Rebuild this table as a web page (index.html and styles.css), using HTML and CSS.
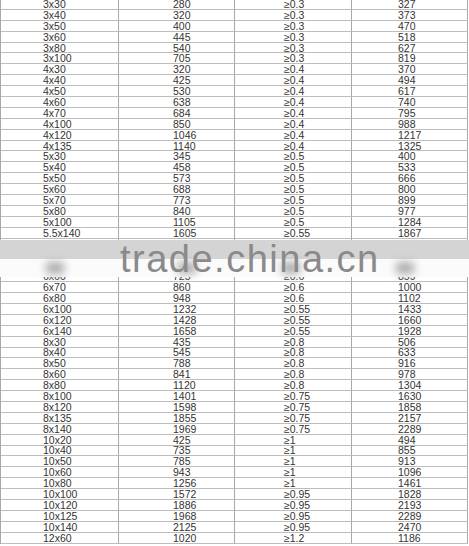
FILE: index.html
```html
<!DOCTYPE html>
<html>
<head>
<meta charset="utf-8">
<link rel="stylesheet" href="styles.css">
</head>
<body>
<div class="page">
  <div class="tbl">
    <div class="c">3x30</div><div class="c">280</div><div class="c">≥0.3</div><div class="c">327</div>
    <div class="c">3x40</div><div class="c">320</div><div class="c">≥0.3</div><div class="c">373</div>
    <div class="c">3x50</div><div class="c">400</div><div class="c">≥0.3</div><div class="c">470</div>
    <div class="c">3x60</div><div class="c">445</div><div class="c">≥0.3</div><div class="c">518</div>
    <div class="c">3x80</div><div class="c">540</div><div class="c">≥0.3</div><div class="c">627</div>
    <div class="c">3x100</div><div class="c">705</div><div class="c">≥0.3</div><div class="c">819</div>
    <div class="c">4x30</div><div class="c">320</div><div class="c">≥0.4</div><div class="c">370</div>
    <div class="c">4x40</div><div class="c">425</div><div class="c">≥0.4</div><div class="c">494</div>
    <div class="c">4x50</div><div class="c">530</div><div class="c">≥0.4</div><div class="c">617</div>
    <div class="c">4x60</div><div class="c">638</div><div class="c">≥0.4</div><div class="c">740</div>
    <div class="c">4x70</div><div class="c">684</div><div class="c">≥0.4</div><div class="c">795</div>
    <div class="c">4x100</div><div class="c">850</div><div class="c">≥0.4</div><div class="c">988</div>
    <div class="c">4x120</div><div class="c">1046</div><div class="c">≥0.4</div><div class="c">1217</div>
    <div class="c">4x135</div><div class="c">1140</div><div class="c">≥0.4</div><div class="c">1325</div>
    <div class="c">5x30</div><div class="c">345</div><div class="c">≥0.5</div><div class="c">400</div>
    <div class="c">5x40</div><div class="c">458</div><div class="c">≥0.5</div><div class="c">533</div>
    <div class="c">5x50</div><div class="c">573</div><div class="c">≥0.5</div><div class="c">666</div>
    <div class="c">5x60</div><div class="c">688</div><div class="c">≥0.5</div><div class="c">800</div>
    <div class="c">5x70</div><div class="c">773</div><div class="c">≥0.5</div><div class="c">899</div>
    <div class="c">5x80</div><div class="c">840</div><div class="c">≥0.5</div><div class="c">977</div>
    <div class="c">5x100</div><div class="c">1105</div><div class="c">≥0.5</div><div class="c">1284</div>
    <div class="c">5.5x140</div><div class="c">1605</div><div class="c">≥0.55</div><div class="c">1867</div>
    <div class="c"></div><div class="c"></div><div class="c"></div><div class="c"></div>
    <div class="c"></div><div class="c"></div><div class="c"></div><div class="c"></div>
    <div class="c"></div><div class="c"></div><div class="c"></div><div class="c"></div>
    <div class="c">6x60</div><div class="c">725</div><div class="c">≥0.6</div><div class="c">859</div>
    <div class="c">6x70</div><div class="c">860</div><div class="c">≥0.6</div><div class="c">1000</div>
    <div class="c">6x80</div><div class="c">948</div><div class="c">≥0.6</div><div class="c">1102</div>
    <div class="c">6x100</div><div class="c">1232</div><div class="c">≥0.55</div><div class="c">1433</div>
    <div class="c">6x120</div><div class="c">1428</div><div class="c">≥0.55</div><div class="c">1660</div>
    <div class="c">6x140</div><div class="c">1658</div><div class="c">≥0.55</div><div class="c">1928</div>
    <div class="c">8x30</div><div class="c">435</div><div class="c">≥0.8</div><div class="c">506</div>
    <div class="c">8x40</div><div class="c">545</div><div class="c">≥0.8</div><div class="c">633</div>
    <div class="c">8x50</div><div class="c">788</div><div class="c">≥0.8</div><div class="c">916</div>
    <div class="c">8x60</div><div class="c">841</div><div class="c">≥0.8</div><div class="c">978</div>
    <div class="c">8x80</div><div class="c">1120</div><div class="c">≥0.8</div><div class="c">1304</div>
    <div class="c">8x100</div><div class="c">1401</div><div class="c">≥0.75</div><div class="c">1630</div>
    <div class="c">8x120</div><div class="c">1598</div><div class="c">≥0.75</div><div class="c">1858</div>
    <div class="c">8x135</div><div class="c">1855</div><div class="c">≥0.75</div><div class="c">2157</div>
    <div class="c">8x140</div><div class="c">1969</div><div class="c">≥0.75</div><div class="c">2289</div>
    <div class="c">10x20</div><div class="c">425</div><div class="c">≥1</div><div class="c">494</div>
    <div class="c">10x40</div><div class="c">735</div><div class="c">≥1</div><div class="c">855</div>
    <div class="c">10x50</div><div class="c">785</div><div class="c">≥1</div><div class="c">913</div>
    <div class="c">10x60</div><div class="c">943</div><div class="c">≥1</div><div class="c">1096</div>
    <div class="c">10x80</div><div class="c">1256</div><div class="c">≥1</div><div class="c">1461</div>
    <div class="c">10x100</div><div class="c">1572</div><div class="c">≥0.95</div><div class="c">1828</div>
    <div class="c">10x120</div><div class="c">1886</div><div class="c">≥0.95</div><div class="c">2193</div>
    <div class="c">10x125</div><div class="c">1968</div><div class="c">≥0.95</div><div class="c">2289</div>
    <div class="c">10x140</div><div class="c">2125</div><div class="c">≥0.95</div><div class="c">2470</div>
    <div class="c">12x60</div><div class="c">1020</div><div class="c">≥1.2</div><div class="c">1186</div>
  </div>
  <div class="mark">
    <div class="band"></div>
    <div class="fade">
      <span class="smudge s1"></span>
      <span class="smudge s2"></span>
      <span class="smudge s3"></span>
      <span class="smudge s4"></span>
    </div>
    <div class="wm">trade.china.cn</div>
  </div>
</div>
</body>
</html>
```

FILE: styles.css
```css
html, body {
  margin: 0;
  padding: 0;
  background: #fff;
}

.page {
  position: relative;
  width: 469px;
  height: 546px;
  overflow: hidden;
}

.tbl {
  margin-top: -1px;
  display: grid;
  grid-template-columns: 118px 116px 117px 116px;
  grid-auto-rows: 10.9px;
  width: 468px;
  border-left: 1px solid #a9a9a9;
  font-family: "Liberation Sans", Arial, sans-serif;
  font-size: 10.5px;
  color: #333;
}

.c {
  box-sizing: border-box;
  display: flex;
  align-items: center;
  border-right: 1px solid #a9a9a9;
  border-bottom: 1px solid #bdbdbd;
  line-height: 10px;
  white-space: nowrap;
  overflow: hidden;
}

.c:nth-child(4n+1) { padding-left: 42px; }
.c:nth-child(4n+2) { padding-left: 54px; }
.c:nth-child(4n+3) { padding-left: 49px; }
.c:nth-child(4n+4) { padding-left: 46px; }

.mark {
  position: absolute;
  left: 0;
  top: 240px;
  width: 469px;
  height: 37px;
}

.band {
  height: 19px;
  background: #d4d4d4;
}

.fade {
  position: relative;
  height: 18px;
  background: #fbfbfb;
}

.smudge {
  position: absolute;
  top: 3px;
  width: 18px;
  height: 12px;
  background: #adadad;
  filter: blur(4px);
}

.s1 { left: 46px; }
.s2 { left: 178px; }
.s3 { left: 282px; }
.s4 { left: 396px; }

.wm {
  position: absolute;
  left: 120px;
  top: 0;
  font-family: "Liberation Sans", Arial, sans-serif;
  font-size: 38px;
  line-height: 38px;
  letter-spacing: 1.5px;
  color: #8a8a8a;
  white-space: nowrap;
}
```
